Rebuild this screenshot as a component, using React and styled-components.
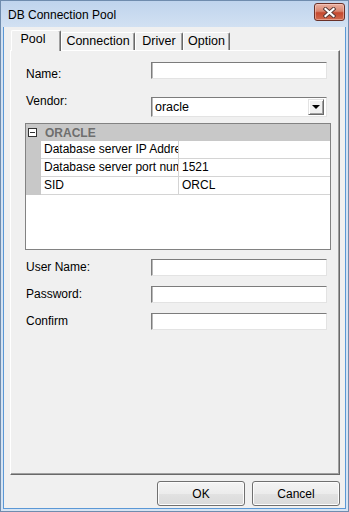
import React from "react";
import styled, { createGlobalStyle } from "styled-components";

const Global = createGlobalStyle`
  html, body { margin: 0; padding: 0; background: #ffffff; }
  body { font-family: "Liberation Sans", Arial, sans-serif; font-size: 12px; color: #000; }
  * { box-sizing: border-box; }
`;

const Window = styled.div`
  width: 349px;
  height: 512px;
  display: flex;
  flex-direction: column;
  border: 1px solid #6f8cae;
  background: linear-gradient(#bfd4ed, #d2e1f2 26px, #d6e4f3);
  padding: 0 2px 2px;
`;

const TitleBar = styled.div`
  height: 26px;
  flex: none;
  display: flex;
  align-items: center;
  justify-content: space-between;
  padding: 0 1px 0 5px;
`;

const Title = styled.span`
  font-size: 12px;
  color: #000;
  margin-top: 1px;
`;

const CloseButton = styled.div`
  width: 31px;
  height: 18px;
  margin-top: -4px;
  border: 1px solid #6a3128;
  border-radius: 3px;
  background: linear-gradient(#eab1a2, #d98670 45%, #c5492f 55%, #d06a4f);
  display: flex;
  align-items: center;
  justify-content: center;
  box-shadow: inset 0 0 0 1px rgba(255, 220, 210, 0.45);
`;

const Client = styled.div`
  flex: 1;
  display: flex;
  flex-direction: column;
  background: #f0f0f0;
  border: 1px solid #5b98d6;
  border-top: none;
  padding: 4px 5px 2px 6px;
`;

const TabStrip = styled.div`
  height: 20px;
  flex: none;
  display: flex;
  align-items: flex-end;
  padding-left: 1px;
  margin-bottom: -1px;
  position: relative;
  z-index: 1;
`;

const Tab = styled.div`
  width: ${(p) => p.$w}px;
  height: ${(p) => (p.$active ? 21 : 18)}px;
  margin-bottom: ${(p) => (p.$active ? 0 : 1)}px;
  background: #f0f0f0;
  border-top: 1px solid #ffffff;
  border-left: 1px solid #ffffff;
  border-right: 1px solid #696969;
  box-shadow: inset -1px 0 #a0a0a0;
  border-radius: 2px 2px 0 0;
  text-align: center;
  padding-top: ${(p) => (p.$active ? 1 : 1)}px;
  padding-right: ${(p) => (p.$active ? 6 : 0)}px;
  line-height: 14px;
  font-size: 12.5px;
`;

const Panel = styled.div`
  flex: 1;
  display: flex;
  flex-direction: column;
  background: #f0f0f0;
  border-top: 1px solid #ffffff;
  border-left: 1px solid #ffffff;
  border-right: 1px solid #696969;
  border-bottom: 1px solid #696969;
  box-shadow: inset -1px -1px #a0a0a0;
  padding: 0 0 0 15px;
`;

const Row = styled.div`
  display: flex;
  align-items: flex-start;
  margin-top: ${(p) => p.$mt}px;
`;

const Label = styled.div`
  width: 125px;
  flex: none;
  line-height: 14px;
  font-size: 12px;
  margin-top: ${(p) => p.$mt || 0}px;
`;

const TextBox = styled.div`
  width: 176px;
  height: 17px;
  background: #ffffff;
  border-top: 1px solid #7c7c7c;
  border-left: 1px solid #7c7c7c;
  border-right: 1px solid #e3e3e3;
  border-bottom: 1px solid #e3e3e3;
  box-shadow: inset 1px 0 #b9b9b9;
`;

const Select = styled.div`
  width: 176px;
  height: 20px;
  margin-top: ${(p) => p.$mt || 0}px;
  background: #ffffff;
  border-top: 1px solid #7c7c7c;
  border-left: 1px solid #7c7c7c;
  border-right: 1px solid #e3e3e3;
  border-bottom: 1px solid #e3e3e3;
  box-shadow: inset 1px 0 #b9b9b9;
  display: flex;
  align-items: center;
  padding: 1px 2px 1px 3px;
`;

const SelectValue = styled.span`
  flex: 1;
  font-size: 12.5px;
  line-height: 16px;
`;

const ArrowButton = styled.div`
  width: 16px;
  height: 16px;
  background: #f0f0f0;
  border-top: 1px solid #e3e3e3;
  border-left: 1px solid #e3e3e3;
  border-right: 1px solid #696969;
  border-bottom: 1px solid #696969;
  box-shadow: inset 1px 1px #ffffff, inset -1px -1px #a0a0a0;
  display: flex;
  align-items: center;
  justify-content: center;
`;

const Triangle = styled.div`
  width: 0;
  height: 0;
  border-left: 4px solid transparent;
  border-right: 4px solid transparent;
  border-top: 4px solid #000;
`;

const Grid = styled.div`
  width: 306px;
  height: 127px;
  margin: 6px 0 0 -1px;
  border: 1px solid #828282;
  background: #ffffff;
  display: flex;
  flex-direction: column;
`;

const GroupHeader = styled.div`
  height: 17px;
  flex: none;
  background: #c8c8c8;
  display: flex;
  align-items: center;
  padding-left: 2px;
`;

const Expander = styled.div`
  width: 9px;
  height: 9px;
  border: 1px solid #333;
  background: #ffffff;
  position: relative;
  margin-right: 8px;
  &::after {
    content: "";
    position: absolute;
    left: 1px;
    top: 3px;
    width: 5px;
    height: 1px;
    background: #333;
  }
`;

const GroupTitle = styled.span`
  font-weight: bold;
  font-size: 12px;
  color: #6e6e6e;
`;

const PropRow = styled.div`
  height: 18px;
  flex: none;
  display: flex;
`;

const Gutter = styled.div`
  width: 15px;
  flex: none;
  background: #c8c8c8;
`;

const Cell = styled.div`
  width: ${(p) => (p.$w ? `${p.$w}px` : "auto")};
  flex: ${(p) => (p.$w ? "none" : "1")};
  border-bottom: 1px solid #d4d4d4;
  border-right: ${(p) => (p.$w ? "1px solid #d4d4d4" : "none")};
  padding-left: 3px;
  line-height: 17px;
  font-size: 12px;
  white-space: nowrap;
  overflow: hidden;
`;

const Footer = styled.div`
  flex: none;
  display: flex;
  justify-content: flex-end;
  gap: 7px;
  margin-top: 6px;
  padding-right: 0;
`;

const Button = styled.div`
  width: 88px;
  height: 25px;
  border: 1px solid #707070;
  border-radius: 3px;
  background: linear-gradient(#f4f4f4, #ececec 50%, #e2e2e2 50%, #dadada);
  box-shadow: inset 0 0 0 1px #fcfcfc;
  display: flex;
  align-items: center;
  justify-content: center;
  font-size: 12px;
`;

const rows = [
  { name: "Database server IP Address", value: "" },
  { name: "Database server port number", value: "1521" },
  { name: "SID", value: "ORCL" },
];

export default function App() {
  return (
    <>
      <Global />
      <Window>
        <TitleBar>
          <Title>DB Connection Pool</Title>
          <CloseButton>
            <svg width="13" height="11" viewBox="0 0 13 11">
              <path d="M2.5 2 L10.5 9 M10.5 2 L2.5 9" stroke="#5a3a36" strokeWidth="4" strokeLinecap="square" />
              <path d="M2.5 2 L10.5 9 M10.5 2 L2.5 9" stroke="#ffffff" strokeWidth="2.2" strokeLinecap="square" />
            </svg>
          </CloseButton>
        </TitleBar>
        <Client>
          <TabStrip>
            <Tab $w={50} $active>Pool</Tab>
            <Tab $w={74}>Connection</Tab>
            <Tab $w={48}>Driver</Tab>
            <Tab $w={47}>Option</Tab>
          </TabStrip>
          <Panel>
            <Row $mt={11}>
              <Label $mt={5}>Name:</Label>
              <TextBox />
            </Row>
            <Row $mt={13}>
              <Label>Vendor:</Label>
              <Select $mt={3}>
                <SelectValue>oracle</SelectValue>
                <ArrowButton>
                  <Triangle />
                </ArrowButton>
              </Select>
            </Row>
            <Grid>
              <GroupHeader>
                <Expander />
                <GroupTitle>ORACLE</GroupTitle>
              </GroupHeader>
              {rows.map((r) => (
                <PropRow key={r.name}>
                  <Gutter />
                  <Cell $w={138}>{r.name}</Cell>
                  <Cell>{r.value}</Cell>
                </PropRow>
              ))}
            </Grid>
            <Row $mt={9}>
              <Label $mt={1}>User Name:</Label>
              <TextBox />
            </Row>
            <Row $mt={10}>
              <Label $mt={1}>Password:</Label>
              <TextBox />
            </Row>
            <Row $mt={10}>
              <Label $mt={1}>Confirm</Label>
              <TextBox />
            </Row>
          </Panel>
          <Footer>
            <Button>OK</Button>
            <Button>Cancel</Button>
          </Footer>
        </Client>
      </Window>
    </>
  );
}
